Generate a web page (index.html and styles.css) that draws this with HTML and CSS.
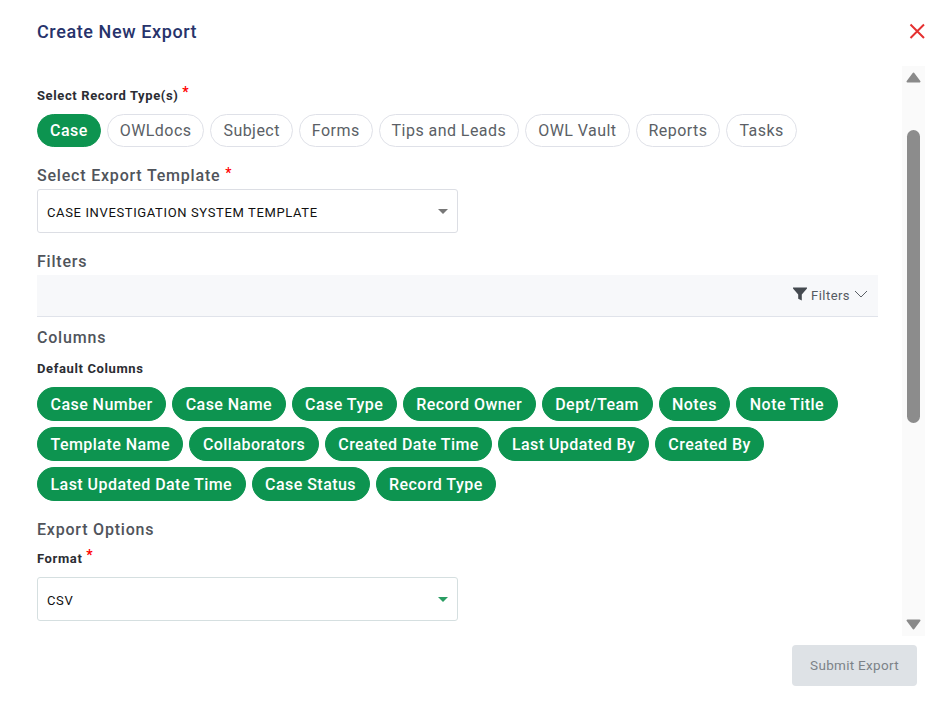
FILE: index.html
```html
<!DOCTYPE html>
<html lang="en">

<head>
    <title>Create New Export</title>
    <link rel="stylesheet" href="styles.css">
</head>

<body>

    <div class="modal">
        <div class="modal-header">
            <h1 class="modal-title">Create New Export</h1>
            <button class="close-btn" aria-label="Close">
                <svg width="16" height="16" viewBox="0 0 16 16">
                    <path d="M1.5 1.5 L15 15 M15 1.5 L1.5 15" stroke="#e53030" stroke-width="2" fill="none" />
                </svg>
            </button>
        </div>

        <div class="modal-body">
            <div class="form-area">
                <div class="small-label record-label">Select Record Type(s) <span class="req">*</span></div>
                <div class="chips record-chips">
                    <span class="chip chip-on">Case</span>
                    <span class="chip">OWLdocs</span>
                    <span class="chip">Subject</span>
                    <span class="chip">Forms</span>
                    <span class="chip">Tips and Leads</span>
                    <span class="chip">OWL Vault</span>
                    <span class="chip">Reports</span>
                    <span class="chip">Tasks</span>
                </div>

                <div class="section-label template-label">Select Export Template <span class="req">*</span></div>
                <div class="select">
                    <span>CASE INVESTIGATION SYSTEM TEMPLATE</span>
                    <span class="caret"></span>
                </div>

                <div class="section-label filters-label">Filters</div>
                <div class="filter-bar">
                    <svg class="funnel" width="14" height="14" viewBox="0 0 14 14">
                        <path d="M0 0.5 H14 V1.5 L8.8 7.4 V13.5 L5.2 11.8 V7.4 L0 1.5 Z" fill="#454a50" />
                    </svg>
                    <span class="filter-text">Filters</span>
                    <svg class="chevron" width="14" height="8" viewBox="0 0 14 8">
                        <path d="M1 1 L7 7 L13 1" stroke="#5b6066" stroke-width="1" fill="none" />
                    </svg>
                </div>

                <div class="section-label columns-label">Columns</div>
                <div class="small-label default-label">Default Columns</div>
                <div class="chips column-chips">
                    <span class="chip chip-on">Case Number</span>
                    <span class="chip chip-on">Case Name</span>
                    <span class="chip chip-on">Case Type</span>
                    <span class="chip chip-on">Record Owner</span>
                    <span class="chip chip-on">Dept/Team</span>
                    <span class="chip chip-on">Notes</span>
                    <span class="chip chip-on">Note Title</span>
                    <span class="chip chip-on">Template Name</span>
                    <span class="chip chip-on">Collaborators</span>
                    <span class="chip chip-on">Created Date Time</span>
                    <span class="chip chip-on">Last Updated By</span>
                    <span class="chip chip-on">Created By</span>
                    <span class="chip chip-on">Last Updated Date Time</span>
                    <span class="chip chip-on">Case Status</span>
                    <span class="chip chip-on">Record Type</span>
                </div>

                <div class="section-label options-label">Export Options</div>
                <div class="small-label format-label">Format <span class="req">*</span></div>
                <div class="select format-select">
                    <span>CSV</span>
                    <span class="caret caret-green"></span>
                </div>
                <div class="cut-row">
                    <span class="cut-mark"></span>
                    <span class="cut-mark"></span>
                </div>
            </div>

            <div class="scrollbar">
                <svg class="arrow-up" width="15" height="11" viewBox="0 0 15 11">
                    <path d="M7.5 1.5 L13.5 9.5 H1.5 Z" fill="#8a8a8a" stroke="#8a8a8a" stroke-width="2" stroke-linejoin="round" />
                </svg>
                <span class="thumb"></span>
                <svg class="arrow-down" width="15" height="11" viewBox="0 0 15 11">
                    <path d="M1.5 1.5 H13.5 L7.5 9.5 Z" fill="#8a8a8a" stroke="#8a8a8a" stroke-width="2" stroke-linejoin="round" />
                </svg>
            </div>
        </div>

        <div class="modal-footer">
            <button class="submit-btn" disabled>Submit Export</button>
        </div>
    </div>

</body>

</html>
```

FILE: styles.css
```css
body {
    font-family: Roboto, "Liberation Sans", sans-serif;
    background-color: #fff;
    margin: 0;
}

.modal {
    width: 934px;
    height: 706px;
    overflow: hidden;
}

.modal-header {
    display: flex;
    justify-content: space-between;
    align-items: center;
    height: 66px;
    padding: 0 9px 4px 37px;
    box-sizing: border-box;
}

.modal-title {
    margin: 0;
    font-size: 18px;
    font-weight: 500;
    letter-spacing: 0.6px;
    color: #27336b;
}

.close-btn {
    background: none;
    border: none;
    padding: 0;
    display: flex;
}

.modal-body {
    display: flex;
    height: 570px;
}

.form-area {
    width: 841px;
    margin-left: 37px;
    margin-right: 24px;
    overflow: hidden;
}

.small-label {
    font-size: 13px;
    font-weight: 700;
    letter-spacing: 0.62px;
    line-height: 16px;
    color: #2b2d33;
}

.section-label {
    font-size: 16px;
    font-weight: 500;
    letter-spacing: 0.8px;
    line-height: 18px;
    color: #50545b;
}

.req {
    color: #f00;
    position: relative;
    top: -3px;
    font-size: 14px;
}

.record-label {
    margin-top: 21px;
}

.chips {
    display: flex;
    flex-wrap: wrap;
    gap: 6px;
    margin-top: 10px;
}

.chip {
    height: 33px;
    box-sizing: border-box;
    padding: 0 12.5px;
    display: flex;
    align-items: center;
    border: 1px solid #dfe1e8;
    border-radius: 17px;
    font-size: 16px;
    letter-spacing: 0.45px;
    color: #5b5f66;
    background-color: #fff;
}

.chip-on {
    background-color: #0d9450;
    border-color: #0d9450;
    color: #fff;
    font-weight: 500;
}

.record-chips .chip {
    padding: 0 12px;
}

.column-chips .chip {
    height: 34px;
}

.template-label {
    margin-top: 20px;
}

.select {
    width: 421px;
    height: 44px;
    box-sizing: border-box;
    margin-top: 4px;
    padding: 2px 9px 0;
    display: flex;
    justify-content: space-between;
    align-items: center;
    border: 1px solid #dcdee4;
    border-radius: 3px;
    font-size: 13px;
    letter-spacing: 0.63px;
    color: #111;
}

.caret {
    width: 0;
    height: 0;
    margin-top: -2px;
    border-left: 5px solid transparent;
    border-right: 5px solid transparent;
    border-top: 5px solid #777;
}

.caret-green {
    border-top-color: #2a9d63;
}

.filters-label {
    margin-top: 20px;
}

.filter-bar {
    display: flex;
    justify-content: flex-end;
    align-items: center;
    height: 41px;
    margin-top: 4px;
    padding-right: 10px;
    background-color: #f7f8fa;
    border-bottom: 1px solid #e0e3ea;
}

.funnel {
    margin-right: 4px;
    margin-top: -3px;
}

.filter-text {
    font-size: 13px;
    letter-spacing: 0.45px;
    color: #555a61;
    margin-right: 4px;
}

.chevron {
    margin-top: -3px;
}

.columns-label {
    margin-top: 12px;
}

.default-label {
    margin-top: 14px;
}

.options-label {
    margin-top: 20px;
}

.format-label {
    margin-top: 11px;
}

.format-select {
    margin-top: 10px;
    border-color: #d5dfe0;
}

.cut-row {
    display: flex;
    margin-top: 14px;
    padding-left: 69px;
}

.cut-mark {
    width: 2px;
    height: 1px;
    background-color: #f00;
    margin-right: 402px;
}

.scrollbar {
    width: 23px;
    background-color: #fafafa;
    display: flex;
    flex-direction: column;
    align-items: center;
}

.arrow-up {
    margin-top: 6px;
}

.thumb {
    width: 13px;
    height: 293px;
    margin-top: 47px;
    background-color: #8c8c8c;
    border-radius: 7px;
}

.arrow-down {
    margin-top: 196px;
}

.modal-footer {
    display: flex;
    justify-content: flex-end;
    padding: 9px 17px 0 0;
}

.submit-btn {
    width: 125px;
    height: 41px;
    padding-bottom: 2px;
    border: none;
    border-radius: 4px;
    background-color: #dee2e6;
    color: #7c8288;
    font-family: inherit;
    font-size: 13.5px;
    letter-spacing: 0.3px;
}
```
